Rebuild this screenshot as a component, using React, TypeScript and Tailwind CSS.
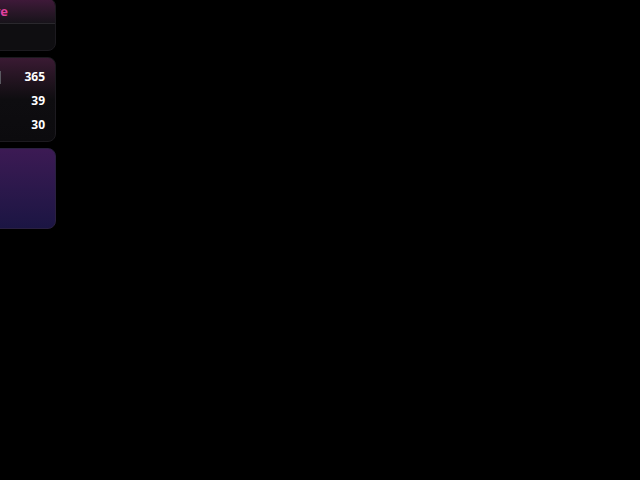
import React from "react";

const stats = [
  { label: "Total", value: "365" },
  { label: "Week", value: "39" },
  { label: "Today", value: "30" },
];

export default function App() {
  return (
    <div className="min-h-screen w-[640px] h-[480px] overflow-hidden bg-black" style={{ fontFamily: "'Open Sans', 'Noto Sans', sans-serif" }}>
      {/* drawer slid mostly off-screen */}
      <aside className="w-[200px] -ml-[144px] -mt-[2px] flex flex-col gap-[6px]">
        <div className="h-[53px] rounded-lg border border-[#1c1a1f] bg-[#0f0e11] overflow-hidden">
          <div className="h-[25px] flex items-center justify-end pr-[47px] bg-gradient-to-b from-[#40193a] to-[#17131a] border-b border-[#2a282d]">
            <span className="text-[13px] font-bold text-[#e0409f] leading-none">Live</span>
          </div>
          <div className="h-[26px]" />
        </div>

        <div className="h-[85px] rounded-lg border border-[#1c1a1f] overflow-hidden bg-gradient-to-b from-[#3a1a33] via-[#0e0d10] to-[#0c0b0e] px-[10px] pt-[10px] flex flex-col gap-[6px]">
          {stats.map((s, i) => (
            <div key={s.label} className="flex items-center justify-between h-[18px]">
              <div className="w-[134px] flex items-center gap-2">
                <span className="text-[11px] text-[#9a98a0]">{s.label}</span>
                {i === 0 && <span className="ml-auto w-[80px] h-[13px] border border-[#5a5860] bg-[#1a181d]" />}
              </div>
              <span className="text-[12px] font-bold text-white leading-none">{s.value}</span>
            </div>
          ))}
        </div>

        <div className="h-[81px] rounded-lg border border-[#2a2040] bg-gradient-to-b from-[#3c1a54] to-[#1b1543]" />
      </aside>
    </div>
  );
}
